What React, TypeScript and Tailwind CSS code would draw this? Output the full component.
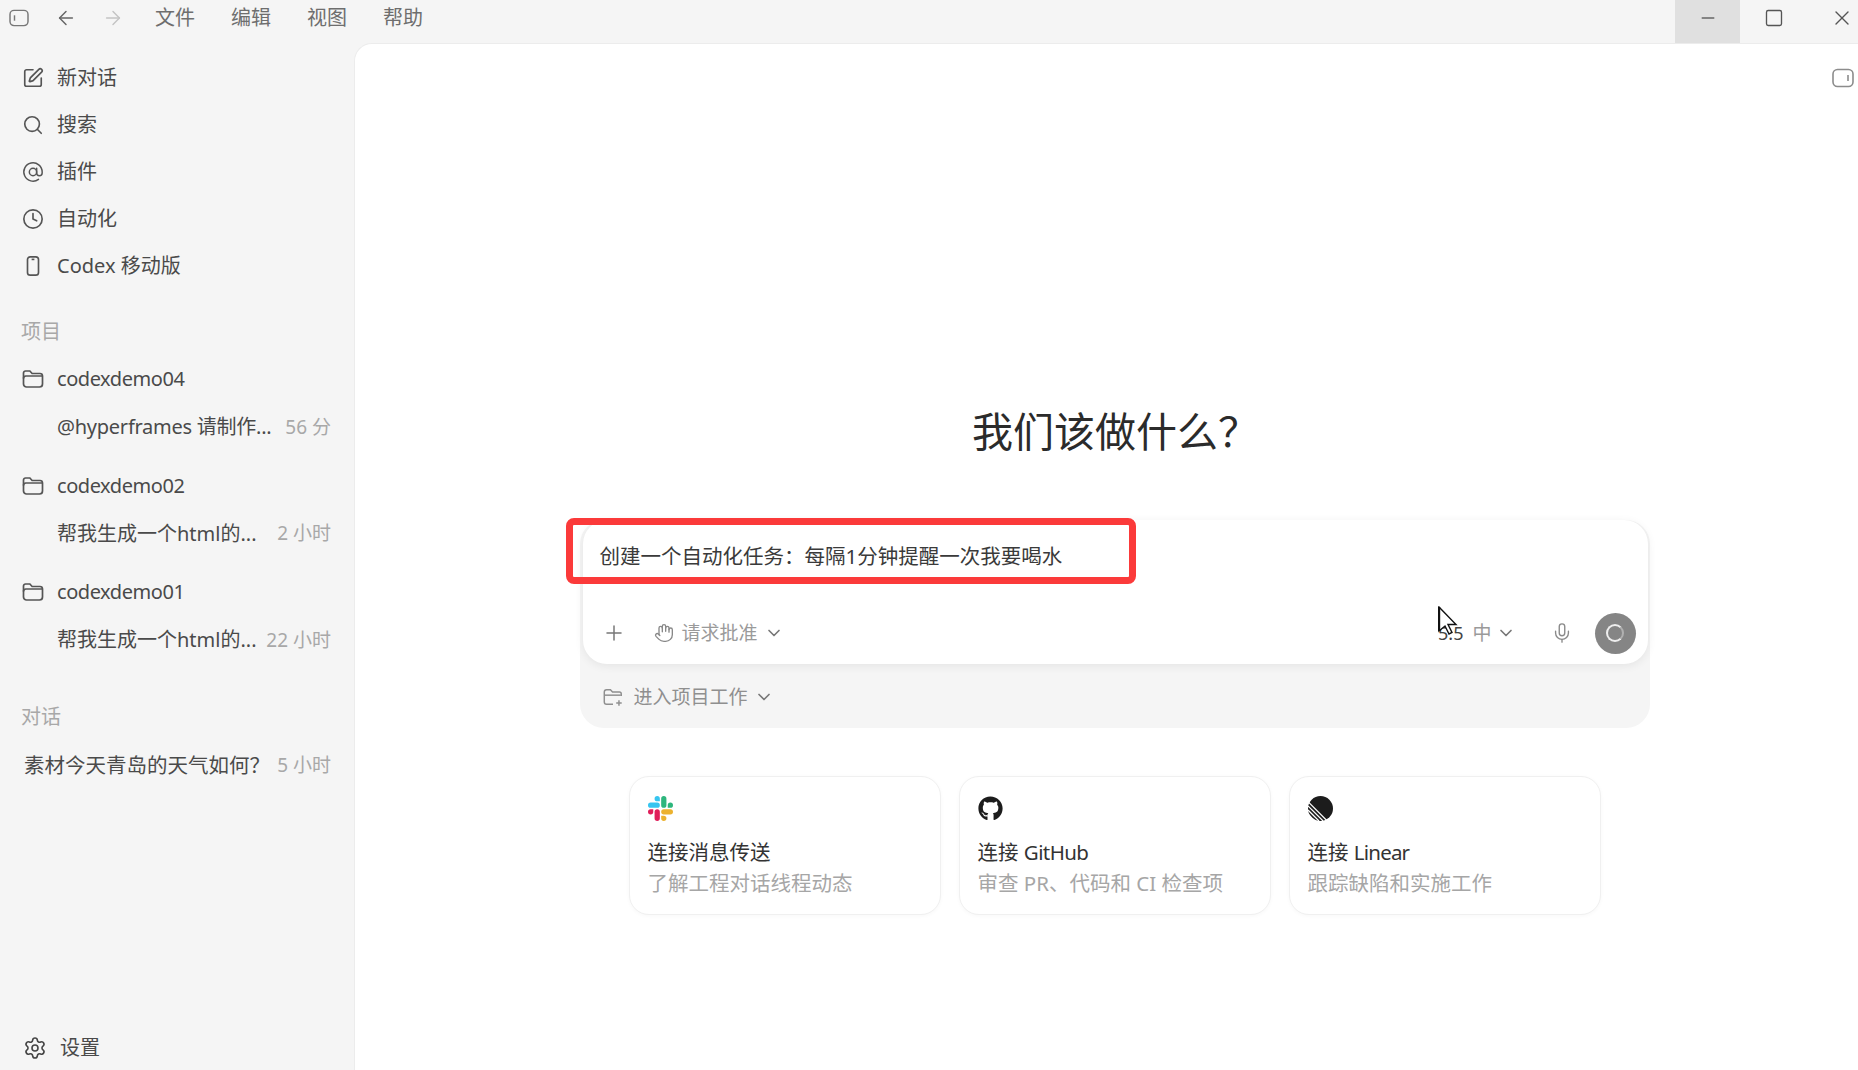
import {
  ArrowLeft,
  ArrowRight,
  AtSign,
  ChevronDown,
  Clock,
  Hand,
  Mic,
  Minus,
  Plus,
  Search,
  Settings,
  Square,
  SquarePen,
  X,
} from "lucide-react";
import { FaGithub } from "react-icons/fa";

function PhoneIcon({ className }: { className?: string }) {
  return (
    <svg viewBox="0 0 24 24" fill="none" stroke="currentColor" strokeWidth="1.8" className={className}>
      <rect x="6" y="2" width="12" height="20" rx="3" />
      <path d="M10.5 4.8h3" />
    </svg>
  );
}

function PanelIcon({ className, bar }: { className?: string; bar: "left" | "right" }) {
  return (
    <svg viewBox="0 0 22 20" fill="none" stroke="currentColor" strokeWidth="1.6" className={className}>
      <rect x="1" y="1.5" width="20" height="17" rx="4.5" />
      {bar === "left" ? <path d="M6 7v6" /> : <path d="M16 7v6" />}
    </svg>
  );
}

function FolderIcon() {
  return (
    <svg viewBox="0 0 24 24" fill="none" stroke="currentColor" strokeWidth="1.7" className="h-[24px] w-[24px] text-[#555555]">
      <path d="M2.5 9V6a2 2 0 0 1 2-2h4.4l2.2 2.5H19a2.5 2.5 0 0 1 2.5 2.5v8a3 3 0 0 1-3 3H5.5a3 3 0 0 1-3-3z" />
      <path d="M2.5 11.5c0-1.4 1-2.5 2.4-2.5h16.6" />
    </svg>
  );
}

function ProjectFolderIcon() {
  return (
    <svg viewBox="0 0 24 24" fill="none" stroke="currentColor" strokeWidth="1.6" className="h-[22px] w-[22px] text-[#8f8f8f]">
      <path d="M21 11V8.5a2 2 0 0 0-2-2h-7.5L9.2 4H5a2.5 2.5 0 0 0-2.5 2.5v11A2.5 2.5 0 0 0 5 20h7" />
      <path d="M2.5 10h18" />
      <path d="M18.5 15.5v6M15.5 18.5h6" />
    </svg>
  );
}

const navItems = [
  { label: "新对话", icon: <SquarePen size={22} strokeWidth={1.8} className="text-[#555555]" /> },
  { label: "搜索", icon: <Search size={22} strokeWidth={1.8} className="text-[#555555]" /> },
  { label: "插件", icon: <AtSign size={22} strokeWidth={1.6} className="text-[#555555]" /> },
  { label: "自动化", icon: <Clock size={22} strokeWidth={1.8} className="text-[#555555]" /> },
  { label: "Codex 移动版", icon: <PhoneIcon className="h-[22px] w-[22px] text-[#555555]" /> },
];

const projects = [
  { name: "codexdemo04", thread: "@hyperframes 请制作...", time: "56 分", tight: true },
  { name: "codexdemo02", thread: "帮我生成一个html的...", time: "2 小时", tight: false },
  { name: "codexdemo01", thread: "帮我生成一个html的...", time: "22 小时", tight: false },
];

function SlackLogo() {
  return (
    <svg viewBox="0 0 24 24" className="h-[25px] w-[25px]">
      <path fill="#e01e5a" d="M5.042 15.165a2.528 2.528 0 0 1-2.52 2.523A2.528 2.528 0 0 1 0 15.165a2.527 2.527 0 0 1 2.522-2.52h2.52v2.52zm1.271 0a2.527 2.527 0 0 1 2.521-2.52 2.527 2.527 0 0 1 2.521 2.52v6.313A2.528 2.528 0 0 1 8.834 24a2.528 2.528 0 0 1-2.521-2.522v-6.313z" />
      <path fill="#36c5f0" d="M8.834 5.042a2.528 2.528 0 0 1-2.521-2.52A2.528 2.528 0 0 1 8.834 0a2.528 2.528 0 0 1 2.521 2.522v2.52H8.834zm0 1.271a2.528 2.528 0 0 1 2.521 2.521 2.528 2.528 0 0 1-2.521 2.521H2.522A2.528 2.528 0 0 1 0 8.834a2.528 2.528 0 0 1 2.522-2.521h6.312z" />
      <path fill="#2eb67d" d="M18.956 8.834a2.528 2.528 0 0 1 2.522-2.521A2.528 2.528 0 0 1 24 8.834a2.528 2.528 0 0 1-2.522 2.521h-2.522V8.834zm-1.27 0a2.528 2.528 0 0 1-2.523 2.521 2.527 2.527 0 0 1-2.52-2.521V2.522A2.527 2.527 0 0 1 15.163 0a2.528 2.528 0 0 1 2.523 2.522v6.312z" />
      <path fill="#ecb22e" d="M15.163 18.956a2.528 2.528 0 0 1 2.523 2.522A2.528 2.528 0 0 1 15.163 24a2.527 2.527 0 0 1-2.52-2.522v-2.522h2.52zm0-1.27a2.527 2.527 0 0 1-2.52-2.523 2.526 2.526 0 0 1 2.52-2.52h6.315A2.528 2.528 0 0 1 24 15.163a2.528 2.528 0 0 1-2.522 2.523h-6.315z" />
    </svg>
  );
}

function LinearLogo() {
  return (
    <svg viewBox="0 0 24 24" className="h-[25px] w-[25px]">
      <circle cx="12" cy="12" r="12" fill="#1c1c1c" />
      <g stroke="#ffffff" strokeWidth="1.2">
        <path d="M0 5.5 18.5 24" />
        <path d="M0 9.5 14.5 24" />
        <path d="M0 13.5 10.5 24" />
        <path d="M-1 16.5 7.5 25" />
      </g>
    </svg>
  );
}

function Cursor() {
  return (
    <svg viewBox="0 0 22 30" className="absolute left-[1438px] top-[606px] h-[30px] w-[22px]">
      <path d="M1 1v24l6-5 4 8 3-1.5-4-8h8z" fill="#ffffff" stroke="#111111" strokeWidth="1.4" />
      <path d="M1 1v24" stroke="#111111" strokeWidth="2.4" />
    </svg>
  );
}

const connectCards = [
  { key: "slack", logo: <SlackLogo />, title: "连接消息传送", desc: "了解工程对话线程动态" },
  {
    key: "github",
    logo: <FaGithub size={25} className="text-[#1c1c1c]" />,
    title: <>连接 <span className="tracking-[-0.6px]">GitHub</span></>,
    desc: "审查 PR、代码和 CI 检查项",
  },
  {
    key: "linear",
    logo: <LinearLogo />,
    title: <>连接 <span className="tracking-[-0.8px]">Linear</span></>,
    desc: "跟踪缺陷和实施工作",
  },
];

export default function App() {
  return (
    <div className="relative flex h-[1070px] w-[1858px] flex-col overflow-hidden bg-[#f5f5f5] font-['Noto_Sans','Noto_Sans_CJK_SC',sans-serif] text-[20px] text-[#4a4a4a]">
      {/* title bar */}
      <div className="flex h-[43px] shrink-0 items-center">
        <div className="flex h-full items-center pb-[7px]">
          <PanelIcon bar="left" className="ml-[9px] h-[18px] w-[20px] text-[#777777]" />
          <ArrowLeft size={22} strokeWidth={1.6} className="ml-[26px] text-[#666666]" />
          <ArrowRight size={22} strokeWidth={1.6} className="ml-[25px] text-[#c4c4c4]" />
          <div className="ml-[31px] flex gap-[36px] text-[#6e6e6e]">
            <span>文件</span>
            <span>编辑</span>
            <span>视图</span>
            <span>帮助</span>
          </div>
        </div>
        <div className="ml-auto flex h-full">
          <div className="flex w-[65px] items-center justify-center bg-[#e0e0e0] pb-[7px]">
            <Minus size={20} strokeWidth={1.6} className="text-[#666666]" />
          </div>
          <div className="flex w-[68px] items-center justify-center pb-[7px]">
            <Square size={20} strokeWidth={1.6} className="text-[#555555]" />
          </div>
          <div className="flex w-[50px] items-center justify-center pb-[7px] pl-[17px]">
            <X size={24} strokeWidth={1.4} className="text-[#555555]" />
          </div>
        </div>
      </div>

      <div className="flex min-h-0 flex-1">
        {/* sidebar */}
        <aside className="flex w-[354px] shrink-0 flex-col pt-[11px]">
          {navItems.map((item) => (
            <div key={item.label} className="flex h-[47px] shrink-0 items-center pl-[22px]">
              {item.icon}
              <span className="ml-[13px]">{item.label}</span>
            </div>
          ))}

          <div className="mt-[28px] flex h-[30px] shrink-0 items-center pl-[21px] text-[#a8a8a8]">项目</div>
          <div className="mt-[8px]">
            {projects.map((p) => (
              <div key={p.name} className="mb-[10.5px]">
                <div className="flex h-[48px] items-center pl-[21px]">
                  <FolderIcon />
                  <span className="ml-[12px] tracking-[-0.45px]">{p.name}</span>
                </div>
                <div className="flex h-[48px] items-center justify-between pl-[57px] pr-[23px]">
                  <span className={p.tight ? "tracking-[-0.25px]" : ""}>{p.thread}</span>
                  <span className="text-[19px] text-[#a8a8a8]">{p.time}</span>
                </div>
              </div>
            ))}
          </div>

          <div className="mt-[27px] flex h-[30px] shrink-0 items-center pl-[21px] text-[#a8a8a8]">对话</div>
          <div className="mt-[10px] flex h-[48px] shrink-0 items-center justify-between pl-[24px] pr-[23px]">
            <span className="text-[20.5px]">素材今天青岛的天气如何？</span>
            <span className="text-[19px] text-[#a8a8a8]">5 小时</span>
          </div>

          <div className="mt-auto flex h-[44px] shrink-0 items-center pl-[23px]">
            <Settings size={24} strokeWidth={1.6} className="text-[#444444]" />
            <span className="ml-[13px]">设置</span>
          </div>
        </aside>

        {/* main panel */}
        <main className="relative flex flex-1 flex-col items-center rounded-tl-[18px] border-l border-t border-[#ececec] bg-white pl-[16px] pt-[358px]">
          <PanelIcon bar="right" className="absolute right-[4px] top-[24px] h-[20px] w-[22px] text-[#8c8c8c]" />

          <h1 className="ml-[2px] h-[59px] text-[41px] font-normal leading-[59px] text-[#2b2b2b]">我们该做什么？</h1>

          <div className="mt-[59px] w-[1070px] rounded-[24px] bg-[#f5f5f5]">
            <div className="ml-[3px] mr-[2px] flex h-[144px] flex-col rounded-[24px] bg-white shadow-[0_2px_10px_rgba(0,0,0,0.07)]">
              <div className="pl-[17px] pt-[20px] text-[20.5px] leading-[32px] text-[#3a3a3a]">创建一个自动化任务：每隔1分钟提醒一次我要喝水</div>
              <div className="mt-auto flex h-[62px] items-center pl-[19px] pr-[12px] text-[19px] text-[#9a9a9a]">
                <Plus size={24} strokeWidth={1.5} className="text-[#777777]" />
                <Hand size={20} strokeWidth={1.6} className="ml-[28px] text-[#888888]" />
                <span className="ml-[8px]">请求批准</span>
                <ChevronDown size={20} strokeWidth={2} className="ml-[6px] text-[#777777]" />
                <span className="ml-auto text-[18px] text-[#444444]">5.5</span>
                <span className="ml-[9px]">中</span>
                <ChevronDown size={20} strokeWidth={2} className="ml-[4px] text-[#777777]" />
                <Mic size={22} strokeWidth={1.5} className="ml-[35px] text-[#8a8a8a]" />
                <div className="ml-[22px] flex h-[41px] w-[41px] items-center justify-center rounded-full bg-[#858585]">
                  <div className="h-[18px] w-[18px] rounded-full border-2 border-[#eeeeee] border-r-[#b0b0b0]" />
                </div>
              </div>
            </div>
            <div className="flex h-[64px] items-center pl-[22px] pt-[2px] text-[19px] text-[#8f8f8f]">
              <ProjectFolderIcon />
              <span className="ml-[10px]">进入项目工作</span>
              <ChevronDown size={20} strokeWidth={2} className="ml-[6px] text-[#777777]" />
            </div>
          </div>

          <div className="mt-[48px] flex gap-[18px]">
            {connectCards.map((c) => (
              <div key={c.key} className="flex h-[139px] w-[312px] flex-col rounded-[20px] border border-[#f0f0f0] bg-white pl-[18px] pt-[19px] shadow-[0_1px_4px_rgba(0,0,0,0.03)]">
                <div className="h-[26px]">{c.logo}</div>
                <div className="mt-[15px] text-[20.5px] leading-[30px] text-[#333333]">{c.title}</div>
                <div className="text-[20.5px] leading-[33px] text-[#a6a6a6]">{c.desc}</div>
              </div>
            ))}
          </div>
        </main>
      </div>

      {/* red annotation over the composer */}
      <div className="absolute left-[566px] top-[518px] h-[66px] w-[570px] rounded-[8px] border-[7px] border-[#fb3a3a]" />
      <Cursor />
    </div>
  );
}
